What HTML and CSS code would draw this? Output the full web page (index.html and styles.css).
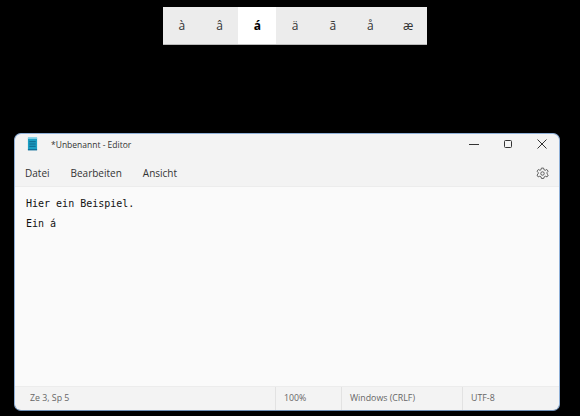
FILE: index.html
```html
<!DOCTYPE html>
<html lang="de">
<head>
  <meta charset="UTF-8">
  <title>Editor</title>
  <link rel="stylesheet" href="styles.css">
</head>
<body>
<ul class="picker">
  <li>à</li>
  <li>â</li>
  <li class="on">á</li>
  <li>ä</li>
  <li>ã</li>
  <li>å</li>
  <li>æ</li>
</ul>

<div class="window">
  <div class="titlebar">
    <svg class="app-icon" width="11" height="14" viewBox="0 0 12 15">
      <rect x="1" y="1" width="10" height="13" fill="#1c9fc4"/>
      <rect x="1" y="0" width="10" height="2" fill="#7fd0e6"/>
      <path d="M2.5 5h7M2.5 7.500h7M2.5 10h7" stroke="#0c5f86" stroke-width="1"/>
      <rect x="1" y="13" width="10" height="1.5" fill="#0f6f9a"/>
    </svg>
    <span class="title">*Unbenannt - Editor</span>
    <div class="controls">
      <svg width="10" height="10" viewBox="0 0 10 10"><path d="M0 5.500h10" stroke="#333" stroke-width="1"/></svg>
      <svg width="10" height="10" viewBox="0 0 10 10"><rect x="1.500" y="1.500" width="7" height="7" rx="1" fill="none" stroke="#333" stroke-width="1"/></svg>
      <svg width="10" height="10" viewBox="0 0 10 10"><path d="M.5.5l9 9M9.500.5l-9 9" stroke="#333" stroke-width="1"/></svg>
    </div>
  </div>
  <div class="menubar">
    <span>Datei</span>
    <span>Bearbeiten</span>
    <span>Ansicht</span>
    <svg class="gear" width="13" height="13" viewBox="0 0 24 24" fill="none" stroke="#555" stroke-width="1.7">
      <circle cx="12" cy="12" r="3.2"/>
      <path d="M10 2h4l.7 3 2.500 1.100 2.700-1.600 2.500 3.300-2 2.200v2.700l2.200 2.100-2.200 3.500-3-1.200-2.400 1.300-.8 2.800h-4l-.8-2.800-2.400-1.300-3 1.200-2.200-3.500 2.200-2.100v-2.700l-2-2.200 2.500-3.300 2.700 1.600L9.300 5z"/>
    </svg>
  </div>
  <div class="editor">
    <p>Hier ein Beispiel.</p>
    <p>Ein á</p>
  </div>
  <div class="statusbar">
    <span class="cell pos">Ze 3, Sp 5</span>
    <span class="cell zoom">100%</span>
    <span class="cell eol">Windows (CRLF)</span>
    <span class="cell enc">UTF-8</span>
  </div>
</div>
</body>
</html>
```

FILE: styles.css
```css
*{padding: 0; margin: 0; box-sizing: border-box;}
li{list-style: none;}
html,body{
  height: 100%;
}
body{
  background: #000;
  padding-top: 7px;
  overflow: hidden;
  font-family: "Open Sans", "Noto Sans", sans-serif;
}
.picker{
  display: flex;
  width: 264px;
  height: 38px;
  margin-left: 163px;
  background-color: #ececec;
  border-bottom: 1px solid #bbb;
}
.picker li{
  flex: 1;
  line-height: 38px;
  text-align: center;
  font-size: 12px;
  color: #333;
}
.picker li.on{
  background-color: #fff;
  color: #000;
  font-weight: bold;
}
.window{
  display: flex;
  flex-direction: column;
  width: 546px;
  height: 278px;
  margin: 88px 0 0 14px;
  border: 1px solid #8fb0d8;
  border-bottom-color: #6f8fb5;
  border-radius: 7px;
  background-color: #f3f3f3;
  overflow: hidden;
}
.titlebar{
  display: flex;
  align-items: center;
  height: 26px;
  padding: 0 0 6px 12px;
  flex: none;
}
.title{
  margin-left: 13px;
  font-size: 8.500px;
  color: #333;
}
.controls{
  display: flex;
  gap: 24px;
  margin-left: auto;
  margin-right: 12px;
}
.menubar{
  display: flex;
  align-items: center;
  gap: 21px;
  height: 26px;
  padding: 0 10px;
  flex: none;
  font-size: 10px;
  color: #333;
}
.gear{
  margin-left: auto;
}
.editor{
  flex: 1;
  padding: 9px 11px;
  background-color: #fafafa;
  border-top: 1px solid #ececec;
  font-family: "DejaVu Sans Mono", monospace;
  font-size: 10px;
  color: #111;
}
.editor p{
  height: 20px;
  line-height: 16px;
}
.statusbar{
  display: flex;
  align-items: center;
  height: 24px;
  flex: none;
  border-top: 1px solid #ececec;
  font-size: 8.800px;
  color: #666;
}
.cell{
  height: 100%;
  line-height: 23px;
  padding-left: 8px;
  border-left: 1px solid #e2e2e2;
}
.pos{
  width: 260px;
  padding-left: 15px;
  border-left: 0;
}
.zoom{
  width: 66px;
}
.eol{
  width: 121px;
}
.enc{
  flex: 1;
}
```
